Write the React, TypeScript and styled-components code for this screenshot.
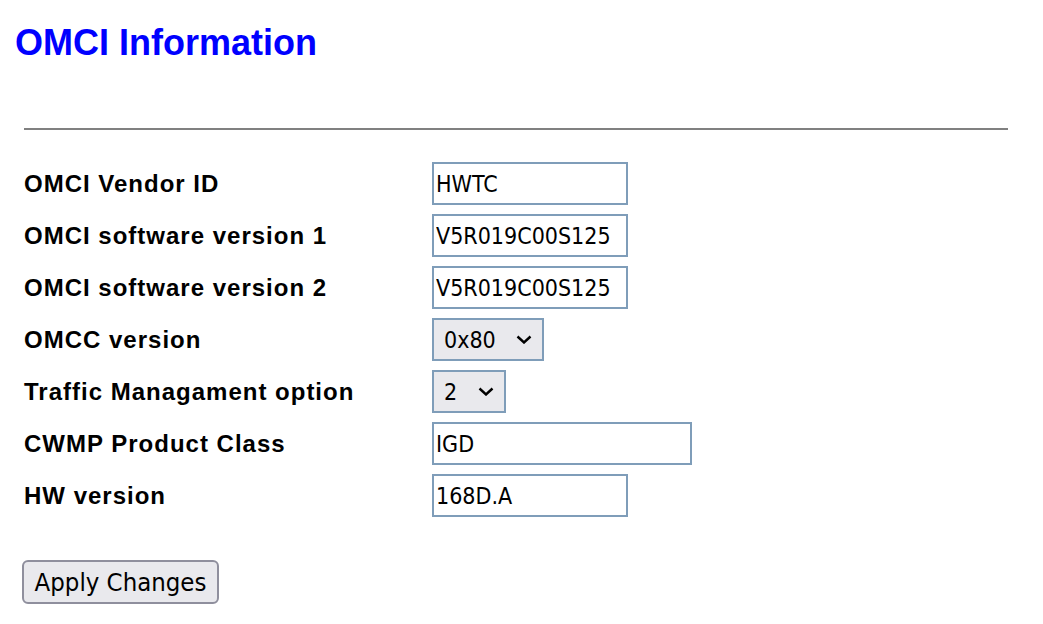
import React from 'react'
import styled, { createGlobalStyle } from 'styled-components';

const GlobalStyle = createGlobalStyle`
    body {
        margin: 0;
        background: #fff;
        font-family: "Liberation Sans", Arial, sans-serif;
    }
`

const Page = styled.div`
    padding: 23px 0 0 0;
`

const Title = styled.h2`
    margin: 0 0 0 15px;
    color: #0000ff;
    font-size: 36px;
    line-height: 40px;
    font-weight: bold;
`

const Divider = styled.hr`
    margin: 65px 0 0 24px;
    width: 984px;
    height: 0;
    border: none;
    border-top: 2px solid #808080;
`

const Form = styled.div`
    display: grid;
    grid-template-columns: 408px auto;
    grid-auto-rows: 43px;
    row-gap: 9px;
    align-items: center;
    margin: 32px 0 0 24px;
`

const Label = styled.div`
    font-size: 24px;
    font-weight: bold;
    letter-spacing: 1px;
    color: #000;
`

const controlFont = `"DejaVu Sans Condensed", "DejaVu Sans", Tahoma, sans-serif`

const TextInput = styled.input<{ $width: number }>`
    box-sizing: border-box;
    width: ${p => p.$width}px;
    height: 43px;
    border: 2px solid #7f9db9;
    padding: 0 2px;
    margin: 0;
    font-family: ${controlFont};
    font-stretch: condensed;
    font-size: 23px;
    color: #000;
    background: #fff;
    outline: none;
`

const SelectWrap = styled.div<{ $width: number }>`
    position: relative;
    width: ${p => p.$width}px;
    height: 43px;
`

const Select = styled.select`
    box-sizing: border-box;
    appearance: none;
    width: 100%;
    height: 43px;
    border: 2px solid #7f9db9;
    border-radius: 0;
    padding: 0 0 0 10px;
    margin: 0;
    font-family: ${controlFont};
    font-stretch: condensed;
    font-size: 23px;
    color: #000;
    background: #e9e9ed;
    outline: none;
`

const Chevron = styled.svg`
    position: absolute;
    right: 12px;
    top: 17px;
    width: 16px;
    height: 9px;
    pointer-events: none;
`

const ApplyButton = styled.button`
    box-sizing: border-box;
    margin: 43px 0 0 22px;
    width: 197px;
    height: 44px;
    padding: 0;
    border: 2px solid #8f8f9d;
    border-radius: 6px;
    background: #e9e9ed;
    font-family: ${controlFont};
    font-stretch: condensed;
    font-size: 25.5px;
    color: #000;
`

function Dropdown({ width, value, options }: { width: number, value: string, options: string[] }) {
    return (
        <SelectWrap $width={width}>
            <Select defaultValue={value}>
                {options.map(o => <option key={o} value={o}>{o}</option>)}
            </Select>
            <Chevron viewBox="0 0 16 9">
                <path d="M1.5 1.5 L8 7.5 L14.5 1.5" fill="none" stroke="#000" strokeWidth="2.4" />
            </Chevron>
        </SelectWrap>
    )
}

function App() {
    return (
        <Page>
            <GlobalStyle />
            <Title>OMCI Information</Title>
            <Divider />

            <Form>
                <Label>OMCI Vendor ID</Label>
                <TextInput $width={196} defaultValue="HWTC" />

                <Label>OMCI software version 1</Label>
                <TextInput $width={196} defaultValue="V5R019C00S125" />

                <Label>OMCI software version 2</Label>
                <TextInput $width={196} defaultValue="V5R019C00S125" />

                <Label>OMCC version</Label>
                <Dropdown width={112} value="0x80" options={["0x80", "0xA0"]} />

                <Label>Traffic Managament option</Label>
                <Dropdown width={74} value="2" options={["0", "1", "2"]} />

                <Label>CWMP Product Class</Label>
                <TextInput $width={260} defaultValue="IGD" />

                <Label>HW version</Label>
                <TextInput $width={196} defaultValue="168D.A" />
            </Form>

            <ApplyButton>Apply Changes</ApplyButton>
        </Page>
    )
}

export default App
